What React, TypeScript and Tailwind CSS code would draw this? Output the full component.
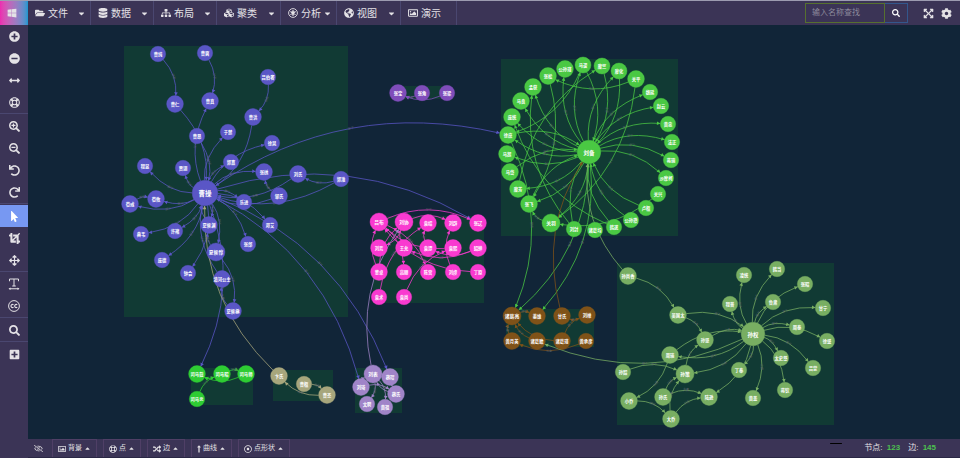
import React, { useState } from 'react';
import {
  FaArrowsAlt,
  FaArrowsAltH,
  FaCaretDown,
  FaCaretUp,
  FaCog,
  FaCrop,
  FaCubes,
  FaDatabase,
  FaExpandArrowsAlt,
  FaFolderOpen,
  FaGlobeAmericas,
  FaLongArrowAltUp,
  FaMinusCircle,
  FaMousePointer,
  FaPlusCircle,
  FaPlusSquare,
  FaRandom,
  FaRedo,
  FaRegDotCircle,
  FaRegEyeSlash,
  FaRegImage,
  FaRegLifeRing,
  FaSearch,
  FaSearchMinus,
  FaSearchPlus,
  FaSitemap,
  FaUndo,
  FaWindows,
} from 'react-icons/fa';

type Node = [name: string, x: number, y: number, r: number];
type Edge = [from: string, to: string, label?: string];

interface Cluster {
  color: string;
  box: [x: number, y: number, width: number, height: number];
  nodes: Node[];
  edges: Edge[];
}

const CLUSTERS: Cluster[] = [
  {
    color: '#5a56c6',
    box: [124, 46, 224, 271],
    nodes: [
      ['曹纯', 158, 54, 7.7],
      ['曹爽', 205, 53, 7.7],
      ['吕伯奢', 268, 77, 7.7],
      ['曹仁', 175, 104, 8.4],
      ['曹真', 210, 101, 8.4],
      ['曹洪', 253, 117, 8.4],
      ['曹昂', 197, 136, 7.7],
      ['于禁', 228, 132, 7.7],
      ['徐晃', 272, 143, 7.7],
      ['郭嘉', 231, 162, 7.7],
      ['程昱', 145, 166, 7.7],
      ['贾诩', 183, 168, 7.7],
      ['张绣', 264, 172, 8.4],
      ['刘氏', 298, 174, 8.4],
      ['郭淮', 341, 179, 7.7],
      ['曹操', 205, 193, 12.8],
      ['荀彧', 130, 204, 8.4],
      ['荀攸', 156, 199, 8.4],
      ['典韦', 141, 234, 7.7],
      ['许褚', 175, 231, 7.7],
      ['庞德', 162, 260, 7.7],
      ['钟会', 188, 273, 7.7],
      ['夏侯渊', 209, 225, 8.4],
      ['夏侯惇', 216, 252, 9],
      ['清河公主', 222, 279, 8.4],
      ['夏侯楙', 233, 311, 8.4],
      ['张郃', 248, 244, 7.7],
      ['乐进', 244, 202, 7.7],
      ['邹氏', 279, 196, 8.4],
      ['邓艾', 270, 225, 7.7],
    ],
    edges: [
      ['曹纯', '曹仁', '兄弟'],
      ['曹爽', '曹真', '父子'],
      ['吕伯奢', '曹洪', '朋友'],
      ['曹仁', '曹操'],
      ['曹操', '曹真', '父子'],
      ['曹洪', '曹操'],
      ['曹昂', '曹操', '父子'],
      ['曹操', '于禁', '部下'],
      ['曹操', '徐晃', '部下'],
      ['曹操', '郭嘉', '部下'],
      ['曹操', '程昱', '部下'],
      ['曹操', '贾诩', '部下'],
      ['曹操', '张绣', '部下'],
      ['邹氏', '张绣', '夫妻'],
      ['刘氏', '曹操', '夫妻'],
      ['郭淮', '刘氏', '部下'],
      ['邹氏', '曹操', '夫妻'],
      ['曹操', '荀彧', '部下'],
      ['曹操', '荀攸', '部下'],
      ['荀彧', '荀攸', '叔侄'],
      ['曹操', '典韦', '部下'],
      ['曹操', '许褚', '部下'],
      ['曹操', '庞德', '部下'],
      ['曹操', '钟会', '部下'],
      ['曹操', '夏侯渊', '部下'],
      ['曹操', '夏侯惇', '部下'],
      ['夏侯渊', '曹操'],
      ['夏侯惇', '夏侯渊', '兄弟'],
      ['清河公主', '曹操', '父女'],
      ['夏侯惇', '夏侯楙', '父子'],
      ['夏侯楙', '清河公主', '夫妻'],
      ['曹操', '张郃', '部下'],
      ['曹操', '乐进', '部下'],
      ['曹操', '邓艾', '部下'],
      ['郭淮', '曹操', '部下'],
      ['曹操', '徐庶', '部下'],
      ['曹操', '张辽', '部下'],
      ['曹操', '刘琦', '部下'],
      ['曹操', '蔡瑁', '部下'],
      ['曹操', '司马懿', '部下'],
    ],
  },
  {
    color: '#7f4dba',
    box: [398, 86, 50, 13],
    nodes: [
      ['张宝', 398, 93, 8.4],
      ['张角', 422, 93, 7.7],
      ['张梁', 447, 93, 7.7],
    ],
    edges: [
      ['张角', '张宝', '兄弟'],
      ['张梁', '张宝'],
    ],
  },
  {
    color: '#4ac843',
    box: [501, 59, 177, 177],
    nodes: [
      ['马谡', 583, 65, 8],
      ['糜竺', 602, 66, 8],
      ['廖化', 619, 71, 8],
      ['关平', 636, 79, 8.4],
      ['魏延', 650, 92, 7.7],
      ['赵云', 661, 106, 7.7],
      ['黄忠', 668, 124, 7.7],
      ['法正', 672, 142, 7.7],
      ['蒋琬', 671, 160, 7.7],
      ['沙摩柯', 666, 178, 7.7],
      ['关兴', 658, 194, 7.7],
      ['卢植', 646, 208, 7.7],
      ['公孙瓒', 631, 220, 7.7],
      ['韩遂', 614, 227, 7.7],
      ['诸葛均', 595, 230, 7.7],
      ['刘封', 574, 229, 7.7],
      ['关羽', 551, 223, 9],
      ['张飞', 529, 204, 8.4],
      ['糜芳', 518, 189, 8.4],
      ['马岱', 510, 172, 8.4],
      ['马超', 507, 154, 8.4],
      ['徐庶', 508, 135, 8.4],
      ['庞统', 512, 117, 8.4],
      ['马良', 521, 101, 8.4],
      ['孟获', 533, 87, 8.4],
      ['张松', 548, 76, 8.4],
      ['公孙瑾', 565, 69, 8.4],
      ['刘备', 589, 152, 11.8],
    ],
    edges: [
      ['刘备', '马谡', '部下'],
      ['马谡', '刘备'],
      ['糜竺', '刘备', '部下'],
      ['刘备', '廖化', '部下'],
      ['廖化', '刘备'],
      ['刘备', '魏延', '部下'],
      ['刘备', '赵云', '部下'],
      ['刘备', '黄忠', '部下'],
      ['刘备', '法正', '部下'],
      ['刘备', '蒋琬', '部下'],
      ['刘备', '沙摩柯', '部下'],
      ['卢植', '刘备', '师生'],
      ['公孙瓒', '刘备', '朋友'],
      ['韩遂', '刘备'],
      ['刘封', '刘备', '父子'],
      ['刘备', '关羽', '兄弟'],
      ['刘备', '张飞', '兄弟'],
      ['张飞', '刘备'],
      ['刘备', '糜芳', '部下'],
      ['马岱', '刘备', '部下'],
      ['刘备', '马超', '部下'],
      ['刘备', '徐庶', '部下'],
      ['徐庶', '刘备'],
      ['刘备', '庞统', '部下'],
      ['刘备', '马良', '部下'],
      ['刘备', '孟获', '部下'],
      ['刘备', '公孙瑾', '部下'],
      ['关平', '关羽', '父子'],
      ['关平', '张松', '兄弟'],
      ['关兴', '关羽', '父子'],
      ['关羽', '张飞', '兄弟'],
      ['张松', '张飞', '部下'],
      ['糜芳', '糜竺', '兄弟'],
      ['刘封', '孟获'],
      ['韩遂', '庞统'],
      ['马谡', '徐庶'],
      ['徐庶', '诸葛亮', '朋友'],
      ['刘备', '诸葛亮', '部下'],
      ['刘备', '姜维', '部下'],
    ],
  },
  {
    color: '#f93ad0',
    box: [373, 216, 111, 87],
    nodes: [
      ['吕布', 379, 222, 9],
      ['刘协', 404, 222, 9],
      ['袁绍', 428, 223, 8.4],
      ['刘辟', 453, 223, 8.4],
      ['张辽', 478, 223, 8.4],
      ['刘焉', 379, 248, 8.4],
      ['王允', 404, 248, 8.4],
      ['袁谭', 428, 248, 8.4],
      ['袁熙', 453, 248, 8.4],
      ['貂蝉', 478, 248, 8.4],
      ['董卓', 379, 272, 8.4],
      ['高顺', 404, 272, 7.7],
      ['陈宫', 428, 272, 7.7],
      ['刘虞', 453, 272, 7.7],
      ['丁原', 478, 272, 7.7],
      ['袁术', 379, 297, 7.7],
      ['袁尚', 404, 297, 7.7],
    ],
    edges: [
      ['吕布', '张辽', '部下'],
      ['吕布', '高顺', '部下'],
      ['吕布', '陈宫', '部下'],
      ['丁原', '吕布', '父子'],
      ['董卓', '吕布', '父子'],
      ['董卓', '刘协'],
      ['貂蝉', '王允', '父女'],
      ['袁谭', '袁绍', '父子'],
      ['袁熙', '吕布'],
      ['袁尚', '袁熙', '兄弟'],
      ['袁术', '袁绍', '兄弟'],
      ['刘虞', '刘辟'],
      ['刘协', '刘辟', '君臣'],
      ['刘协', '刘焉'],
      ['王允', '刘协', '君臣'],
      ['貂蝉', '袁谭'],
    ],
  },
  {
    color: '#7f5218',
    box: [506, 309, 88, 38],
    nodes: [
      ['诸葛亮', 512, 316, 9],
      ['姜维', 537, 316, 8.4],
      ['甘氏', 562, 316, 8.4],
      ['刘禅', 587, 315, 8.4],
      ['黄月英', 512, 341, 8.4],
      ['诸葛瞻', 537, 341, 8.4],
      ['诸葛瑾', 562, 341, 8.4],
      ['黄承彦', 586, 341, 7.7],
    ],
    edges: [
      ['诸葛亮', '姜维', '师生'],
      ['刘禅', '甘氏', '母子'],
      ['黄月英', '诸葛亮', '夫妻'],
      ['诸葛瞻', '诸葛亮', '父子'],
      ['诸葛瑾', '诸葛亮', '兄弟'],
      ['诸葛瑾', '刘禅', '部下'],
      ['黄承彦', '黄月英', '父女'],
      ['甘氏', '刘备'],
    ],
  },
  {
    color: '#2ecc33',
    box: [191, 368, 62, 37],
    nodes: [
      ['司马懿', 197, 374, 8.4],
      ['司马昭', 222, 374, 8.4],
      ['司马师', 246, 374, 8.4],
      ['司马炎', 197, 399, 7.7],
    ],
    edges: [
      ['司马昭', '司马懿', '父子'],
      ['司马师', '司马懿'],
      ['司马昭', '司马师', '兄弟'],
      ['司马炎', '司马昭', '父子'],
    ],
  },
  {
    color: '#a7a67c',
    box: [273, 370, 60, 31],
    nodes: [
      ['卞氏', 279, 376, 8.4],
      ['曹植', 304, 384, 7.7],
      ['曹丕', 327, 395, 8.4],
    ],
    edges: [
      ['曹植', '曹丕', '兄弟'],
      ['曹丕', '卞氏', '母子'],
      ['卞氏', '曹操'],
    ],
  },
  {
    color: '#a084c8',
    box: [355, 368, 47, 45],
    nodes: [
      ['刘表', 373, 374, 9],
      ['蔡瑁', 390, 377, 8.4],
      ['刘琦', 361, 387, 8.4],
      ['蔡氏', 396, 394, 8.4],
      ['文聘', 367, 404, 7.7],
      ['黄祖', 385, 407, 7.7],
    ],
    edges: [
      ['刘表', '文聘', '部下'],
      ['刘表', '黄祖', '部下'],
      ['刘表', '蔡氏'],
      ['蔡氏', '刘表'],
      ['刘琦', '刘表'],
      ['刘琦', '蔡氏'],
      ['刘表', '刘协'],
    ],
  },
  {
    color: '#78ae62',
    box: [617, 263, 217, 162],
    nodes: [
      ['孙尚香', 628, 276, 8.4],
      ['吴国太', 678, 315, 8.4],
      ['凌统', 744, 275, 7.7],
      ['韩当', 777, 269, 7.7],
      ['张昭', 805, 284, 7.7],
      ['甘宁', 823, 308, 7.7],
      ['鲁肃', 773, 302, 7.7],
      ['程普', 730, 304, 7.7],
      ['周泰', 797, 327, 7.7],
      ['徐盛', 827, 341, 7.7],
      ['孙权', 753, 334, 11.8],
      ['孙坚', 705, 340, 8.4],
      ['周瑜', 670, 355, 8.4],
      ['孙韶', 623, 372, 7.7],
      ['孙策', 685, 374, 9],
      ['孙氏', 663, 397, 8.4],
      ['小乔', 629, 401, 8.4],
      ['大乔', 671, 419, 8.4],
      ['陆逊', 709, 397, 8.4],
      ['丁奉', 739, 370, 7.7],
      ['黄盖', 753, 398, 7.7],
      ['太史慈', 781, 358, 7.7],
      ['蒋钦', 785, 390, 7.7],
      ['吕蒙', 813, 368, 7.7],
    ],
    edges: [
      ['孙尚香', '吴国太', '母女'],
      ['吴国太', '孙权', '母子'],
      ['吴国太', '孙坚', '夫妻'],
      ['孙坚', '孙权', '父子'],
      ['孙权', '周瑜', '部下'],
      ['孙权', '孙策', '兄弟'],
      ['孙策', '孙坚', '父子'],
      ['孙韶', '孙策', '部下'],
      ['孙氏', '孙策', '兄妹'],
      ['孙氏', '陆逊', '夫妻'],
      ['大乔', '孙策', '夫妻'],
      ['大乔', '陆逊', '父女'],
      ['小乔', '大乔', '姐妹'],
      ['周瑜', '小乔', '夫妻'],
      ['周瑜', '孙权'],
      ['孙权', '陆逊'],
      ['孙权', '丁奉', '部下'],
      ['孙权', '黄盖', '部下'],
      ['孙权', '太史慈', '部下'],
      ['孙权', '蒋钦'],
      ['孙权', '吕蒙', '部下'],
      ['孙权', '周泰', '部下'],
      ['孙权', '徐盛'],
      ['孙权', '甘宁', '部下'],
      ['孙权', '鲁肃', '部下'],
      ['孙权', '张昭'],
      ['孙权', '韩当', '部下'],
      ['孙权', '凌统', '部下'],
      ['孙权', '程普', '部下'],
      ['孙权', '诸葛瞻', '部下'],
      ['孙尚香', '刘备'],
    ],
  },
];

const NODE_BY_NAME = new Map(CLUSTERS.flatMap((c) => c.nodes).map((n) => [n[0], n]));

// How far every edge bows out, relative to its length
const BEND = 0.22;

const EdgeLine = ({ edge, color }: { edge: Edge; color: string }) => {
  const [from, to, label] = edge;
  const [, x1, y1, r1] = NODE_BY_NAME.get(from)!;
  const [, x2, y2, r2] = NODE_BY_NAME.get(to)!;
  const cx = (x1 + x2) / 2 + (y2 - y1) * BEND;
  const cy = (y1 + y2) / 2 - (x2 - x1) * BEND;
  const d1 = Math.hypot(cx - x1, cy - y1);
  const d2 = Math.hypot(cx - x2, cy - y2);
  const sx = x1 + ((cx - x1) / d1) * r1;
  const sy = y1 + ((cy - y1) / d1) * r1;
  const ex = x2 + ((cx - x2) / d2) * r2;
  const ey = y2 + ((cy - y2) / d2) * r2;
  const mx = (sx + ex) / 4 + cx / 2;
  const my = (sy + ey) / 4 + cy / 2;
  const tip = (Math.atan2(y2 - cy, x2 - cx) * 180) / Math.PI;
  let angle = (Math.atan2(ey - sy, ex - sx) * 180) / Math.PI;
  if (angle > 90) angle -= 180;
  if (angle < -90) angle += 180;

  return (
    <g>
      <path d={`M${sx} ${sy}Q${cx} ${cy} ${ex} ${ey}`} fill="none" stroke={color} strokeWidth="0.9" opacity="0.85" />
      <path d="M0 0L-3.4 -1.8L-3.4 1.8Z" fill={color} transform={`translate(${ex} ${ey}) rotate(${tip})`} />
      {label && (
        <text
          transform={`translate(${mx} ${my}) rotate(${angle})`}
          textAnchor="middle"
          dominantBaseline="central"
          fontSize="3"
          fill="#5f6670"
        >
          {label}
        </text>
      )}
    </g>
  );
};

const Graph = () => (
  <svg
    viewBox="28 25 932 414"
    className="block h-full w-full"
    role="img"
    aria-label="人物关系图"
  >
    {CLUSTERS.map(({ color, box: [x, y, width, height] }) => (
      <rect key={color} x={x} y={y} width={width} height={height} fill="#113a34" />
    ))}
    {CLUSTERS.map(({ color, edges }) =>
      edges.map((edge) => <EdgeLine key={edge[0] + edge[1]} edge={edge} color={color} />)
    )}
    {CLUSTERS.map(({ color, nodes }) =>
      nodes.map(([name, x, y, r]) => (
        <g key={name}>
          <circle cx={x} cy={y} r={r} fill={color} stroke={color} strokeOpacity="0.5" strokeWidth="0.8" />
          <text
            x={x}
            y={y + 0.5}
            textAnchor="middle"
            dominantBaseline="central"
            fontSize={r > 12 ? 6.5 : r > 11 ? 5.5 : r === 9 ? 4.8 : 4.3}
            fontWeight="700"
            fill="#ffffff"
          >
            {name}
          </text>
        </g>
      ))
    )}
  </svg>
);

// Round wheel emblem with six spokes
const WheelIcon = () => (
  <svg viewBox="0 0 20 20" className="size-[10px]" fill="none" stroke="currentColor">
    <circle cx="10" cy="10" r="8.8" strokeWidth="1.8" />
    <path d="M10 4v12M4.8 7l10.4 6M15.2 7L4.8 13" strokeWidth="2.2" />
    <circle cx="10" cy="10" r="2.8" fill="currentColor" />
  </svg>
);

// Two letters C inside a ring
const CcIcon = () => (
  <svg viewBox="0 0 24 24" className="size-3" fill="none" stroke="currentColor">
    <circle cx="12" cy="12" r="10.8" strokeWidth="2" />
    <path d="M11 9.8A3 3 0 1 0 11 14.2M18.4 9.8A3 3 0 1 0 18.4 14.2" strokeWidth="2.2" />
  </svg>
);

// Text tool: serif stem above a width arrow
const TextToolIcon = () => (
  <svg viewBox="0 0 24 24" className="size-3" fill="none" stroke="currentColor" strokeWidth="2">
    <path d="M3 6.5V2h18v4.500M12 2v14M8.500 16h7" />
    <path d="M3 21.500h18" />
    <path d="M5 19l-4 2.500l4 2.500zM19 19l4 2.500l-4 2.500z" fill="currentColor" stroke="none" />
  </svg>
);

const MENUS = [
  { label: '文件', icon: <FaFolderOpen />, width: 'w-[63px]', caret: true },
  { label: '数据', icon: <FaDatabase />, width: 'w-[63px]', caret: true },
  { label: '布局', icon: <FaSitemap />, width: 'w-[63px]', caret: true },
  { label: '聚类', icon: <FaCubes />, width: 'w-16', caret: true },
  { label: '分析', icon: <WheelIcon />, width: 'w-14', caret: true },
  { label: '视图', icon: <FaGlobeAmericas />, width: 'w-16', caret: true },
  { label: '演示', icon: <FaRegImage />, width: 'w-14', caret: false },
];

const TOOL_GROUPS = [
  [
    { label: '添加', icon: <FaPlusCircle /> },
    { label: '删除', icon: <FaMinusCircle /> },
    { label: '水平', icon: <FaArrowsAltH /> },
    { label: '居中', icon: <FaRegLifeRing /> },
  ],
  [
    { label: '放大', icon: <FaSearchPlus /> },
    { label: '缩小', icon: <FaSearchMinus /> },
    { label: '撤销', icon: <FaUndo /> },
    { label: '重做', icon: <FaRedo /> },
  ],
  [
    { label: '选择', icon: <FaMousePointer /> },
    { label: '框选', icon: <FaCrop /> },
    { label: '移动', icon: <FaArrowsAlt /> },
  ],
  [
    { label: '文字', icon: <TextToolIcon /> },
    { label: '标签', icon: <CcIcon /> },
  ],
  [{ label: '查找', icon: <FaSearch /> }],
  [{ label: '新增', icon: <FaPlusSquare /> }],
];

const STYLE_MENUS = [
  { label: '背景', icon: <FaRegImage /> },
  { label: '点', icon: <FaRegLifeRing /> },
  { label: '边', icon: <FaRandom /> },
  { label: '曲线', icon: <FaLongArrowAltUp className="w-1" /> },
  { label: '点形状', icon: <FaRegDotCircle /> },
];

const TopBar = () => (
  <header className="flex h-[25px] shrink-0 border-t border-[#9c9bb0] bg-[#3b3456]">
    <a
      href="#"
      aria-label="首页"
      className="flex w-7 shrink-0 items-center justify-center bg-linear-to-r from-[#ec2bb0] to-[#1497cf] pr-1 text-[10px]"
    >
      <FaWindows />
    </a>
    <nav className="flex">
      {MENUS.map(({ label, icon, width, caret }) => (
        <button
          key={label}
          className={`flex items-center border-r border-[#4a4770] pr-1 pl-[7px] text-[10px] ${width}`}
        >
          {icon}
          <span className="ml-[3px]">{label}</span>
          {caret && <FaCaretDown className="ml-auto size-[9px]" />}
        </button>
      ))}
    </nav>
    <div className="ml-auto flex items-center pr-2">
      <form className="flex h-5" onSubmit={(e) => e.preventDefault()}>
        <input
          type="text"
          aria-label="输入名称查找"
          placeholder="输入名称查找"
          className="w-20 border border-[#56702f] bg-transparent px-1.5 text-[8px] outline-none placeholder:text-[#8d8a9c]"
        />
        <button
          aria-label="查找"
          className="flex w-[23px] items-center justify-center border border-l-0 border-[#33578c] text-[8px] text-white"
        >
          <FaSearch />
        </button>
      </form>
      <button aria-label="全屏" className="ml-[15px] text-[11px]">
        <FaExpandArrowsAlt />
      </button>
      <button aria-label="设置" className="ml-[7px] text-[11px]">
        <FaCog />
      </button>
    </div>
  </header>
);

const SideBar = () => {
  const [active, setActive] = useState('选择');

  return (
    <aside className="flex w-7 shrink-0 flex-col gap-px bg-[#3b3456]">
      {TOOL_GROUPS.map((group) => (
        <div key={group[0].label} className="flex flex-col border-b border-[#4a4770] last:border-b-0">
          {group.map(({ label, icon }) => (
            <button
              key={label}
              aria-label={label}
              onClick={() => setActive(label)}
              className={`flex h-[22px] items-center justify-center text-[11px] ${
                active === label ? 'bg-[#7798f2] text-white' : ''
              }`}
            >
              {icon}
            </button>
          ))}
        </div>
      ))}
    </aside>
  );
};

const BottomBar = () => (
  <footer className="flex h-[19px] shrink-0 items-stretch border-b border-[#2a2745] bg-[#3b3456] text-[8px]">
    <button aria-label="隐藏" className="mr-1 flex w-5 items-center justify-center text-[9px]">
      <FaRegEyeSlash />
    </button>
    <div className="flex gap-1.5">
      {STYLE_MENUS.map(({ label, icon }) => (
        <button
          key={label}
          className="flex items-center gap-[2px] border border-b-0 border-[#4f3f66] px-[5px]"
        >
          {icon}
          <span className="text-[7px]">{label}</span>
          <FaCaretUp className="size-[7px]" />
        </button>
      ))}
    </div>
    <span className="mt-1 ml-auto h-px w-3 rounded-full bg-black" />
    <p className="mr-6 ml-[22px] flex items-center gap-2">
      <span>
        节点: <b className="ml-0.5 text-[#4cc04f]">123</b>
      </span>
      <span>
        边: <b className="ml-0.5 text-[#4cc04f]">145</b>
      </span>
    </p>
  </footer>
);

const App: React.FC = () => (
  <div className="flex h-screen flex-col overflow-hidden bg-[#112538] font-['Liberation_Sans','Noto_Sans_CJK_SC',sans-serif] text-[#e4e2e6]">
    <TopBar />
    <div className="flex min-h-0 flex-1">
      <SideBar />
      <div className="flex min-w-0 flex-1 flex-col">
        <main className="min-h-0 flex-1">
          <Graph />
        </main>
        <BottomBar />
      </div>
    </div>
  </div>
);

export default App;
